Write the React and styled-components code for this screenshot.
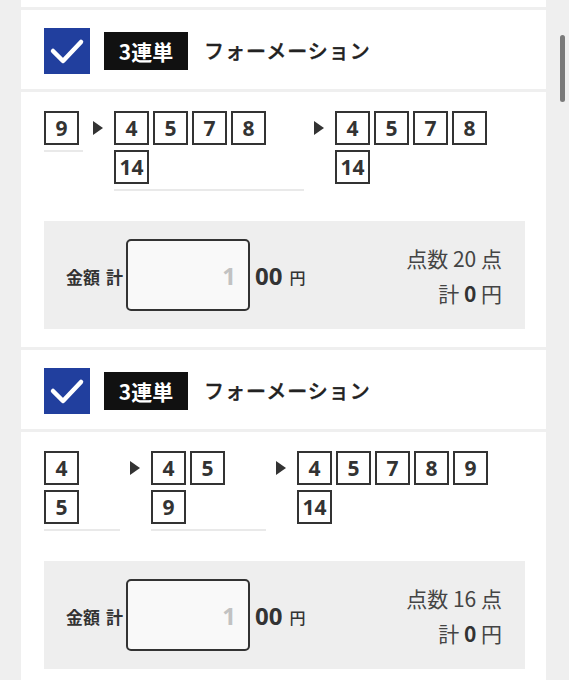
import React from "react";
import styled, { createGlobalStyle } from "styled-components";

const GlobalStyle = createGlobalStyle`
  html, body {
    margin: 0;
    padding: 0;
    overflow: hidden;
    background: #efefef;
    font-family: "Noto Sans CJK JP", "Noto Sans", sans-serif;
    color: #333;
  }
`;

const Page = styled.div`
  display: flex;
  flex-direction: column;
  gap: 3px;
  padding: 0 23px 0 21px;
`;

const PrevTail = styled.div`
  height: 7px;
  background: #fff;
`;

const Header = styled.div`
  display: flex;
  align-items: center;
  gap: 14px;
  height: 79px;
  padding: 2px 23px 0;
  box-sizing: border-box;
  background: #fff;
`;

const Check = styled.div`
  width: 46px;
  height: 46px;
  background: #213f9e;
  display: flex;
  align-items: center;
  justify-content: center;
`;

const TypeLabel = styled.div`
  width: 84px;
  height: 38px;
  background: #111;
  color: #fff;
  font-size: 21px;
  font-weight: 700;
  display: flex;
  align-items: center;
  justify-content: center;
`;

const Title = styled.div`
  font-size: 20px;
  font-weight: 500;
  letter-spacing: 1px;
  color: #222;
  margin-left: 2px;
  -webkit-text-stroke: 0.35px #222;
`;

const Body = styled.div`
  background: #fff;
  padding: 19px 21px 18px 23px;
`;

const Formation = styled.div`
  display: flex;
  align-items: flex-start;
`;

const Column = styled.div`
  display: flex;
  flex-direction: column;
  gap: 5px;
  width: ${(p) => (p.$width ? `${p.$width}px` : "auto")};
  padding-bottom: 5px;
  border-bottom: 2px solid ${(p) => (p.$line ? "#e9e9e9" : "transparent")};
`;

const BoxRow = styled.div`
  display: flex;
  gap: 4px;
`;

const NumBox = styled.div`
  width: 35px;
  height: 34px;
  box-sizing: border-box;
  border: 2px solid #333;
  background: #fff;
  display: flex;
  align-items: center;
  justify-content: center;
  font-family: "Open Sans", "Noto Sans", sans-serif;
  font-size: 21px;
  font-weight: 700;
  color: #333;
`;

const Arrow = styled.div`
  height: 34px;
  display: flex;
  align-items: center;
  margin: 0 11px 0 10px;

  &::before {
    content: "";
    border-left: 10px solid #333;
    border-top: 7px solid transparent;
    border-bottom: 7px solid transparent;
  }
`;

const Summary = styled.div`
  margin-top: 30px;
  height: 108px;
  background: #eeeeee;
  display: flex;
  align-items: center;
  justify-content: space-between;
  padding: 0 23px 0 22px;
`;

const AmountGroup = styled.div`
  display: flex;
  align-items: center;
`;

const AmountLabel = styled.span`
  display: flex;
  gap: 6px;
  font-size: 17px;
  font-weight: 700;
  color: #333;
  margin-right: 3px;
  margin-top: 2px;
`;

const AmountInput = styled.input`
  width: 124px;
  height: 72px;
  box-sizing: border-box;
  border: 2px solid #333;
  border-radius: 5px;
  background: #f9f9f9;
  text-align: right;
  padding: 0 12px 0 8px;
  font-family: "Open Sans", "Noto Sans", sans-serif;
  font-size: 24px;
  font-weight: 700;
  color: #333;
  outline: none;

  &::placeholder {
    color: #c2c2c2;
  }
`;

const Hundreds = styled.span`
  font-family: "Open Sans", "Noto Sans", sans-serif;
  font-size: 24px;
  font-weight: 700;
  color: #333;
  margin-left: 5px;
`;

const Yen = styled.span`
  font-size: 16px;
  font-weight: 500;
  color: #333;
  margin-left: 7px;
  margin-top: 3px;
`;

const Result = styled.div`
  display: flex;
  flex-direction: column;
  align-items: flex-end;
  gap: 1px;
  font-size: 21px;
  color: #444;
  line-height: 34px;
`;

const Strong = styled.b`
  font-weight: 700;
  color: #333;
`;

const Thumb = styled.div`
  position: fixed;
  top: 35px;
  right: 4px;
  width: 5px;
  height: 67px;
  border-radius: 3px;
  background: #7a7a7a;
`;

const bets = [
  {
    points: 20,
    groups: [
      { width: 39, rows: [[9]] },
      { width: 190, rows: [[4, 5, 7, 8], [14]] },
      { rows: [[4, 5, 7, 8], [14]] },
    ],
  },
  {
    points: 16,
    groups: [
      { width: 76, rows: [[4], [5]] },
      { width: 115, rows: [[4, 5], [9]] },
      { rows: [[4, 5, 7, 8, 9], [14]] },
    ],
  },
];

function CheckMark() {
  return (
    <svg width="46" height="46" viewBox="0 0 46 46">
      <polyline
        points="9,23 19,33 37,14"
        fill="none"
        stroke="#fff"
        strokeWidth="4.5"
        strokeLinecap="round"
        strokeLinejoin="round"
      />
    </svg>
  );
}

function BetCard({ bet }) {
  return (
    <>
      <Header>
        <Check>
          <CheckMark />
        </Check>
        <TypeLabel>3連単</TypeLabel>
        <Title>フォーメーション</Title>
      </Header>
      <Body>
        <Formation>
          {bet.groups.map((g, i) => (
            <React.Fragment key={i}>
              {i > 0 && <Arrow />}
              <Column $width={g.width} $line={!!g.width}>
                {g.rows.map((row, j) => (
                  <BoxRow key={j}>
                    {row.map((n) => (
                      <NumBox key={n}>{n}</NumBox>
                    ))}
                  </BoxRow>
                ))}
              </Column>
            </React.Fragment>
          ))}
        </Formation>
        <Summary>
          <AmountGroup>
            <AmountLabel>
              <span>金額</span>
              <span>計</span>
            </AmountLabel>
            <AmountInput placeholder="1" />
            <Hundreds>00</Hundreds>
            <Yen>円</Yen>
          </AmountGroup>
          <Result>
            <span>点数 {bet.points} 点</span>
            <span>
              計 <Strong>0</Strong> 円
            </span>
          </Result>
        </Summary>
      </Body>
    </>
  );
}

export default function App() {
  return (
    <>
      <GlobalStyle />
      <Page>
        <PrevTail />
        {bets.map((bet, i) => (
          <BetCard key={i} bet={bet} />
        ))}
      </Page>
      <Thumb />
    </>
  );
}
